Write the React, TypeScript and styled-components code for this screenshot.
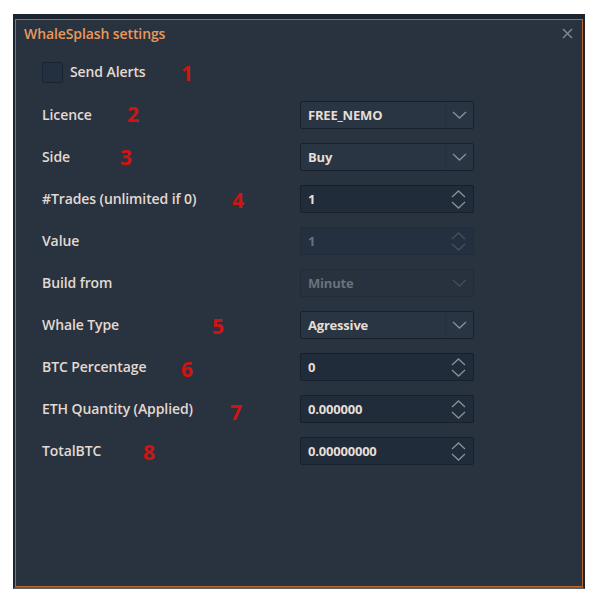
import React from "react";
import styled, { createGlobalStyle } from "styled-components";

const Global = createGlobalStyle`
  html, body { margin: 0; padding: 0; background: #ffffff; }
  body { font-family: "Open Sans", "Noto Sans", sans-serif; }
`;

const Page = styled.div`
  width: 598px;
  height: 608px;
  padding: 14px 0 0 13px;
  box-sizing: border-box;
  position: relative;
`;

const Window = styled.div`
  width: 572px;
  height: 575px;
  box-sizing: border-box;
  border-style: solid;
  border-color: #1c2430;
  border-width: 5px 2px 2px 2px;
  border-bottom-color: #59606a;
  background: #29333f;
`;

const Frame = styled.div`
  height: 100%;
  box-sizing: border-box;
  border: 1px solid #b9672b;
  display: flex;
  flex-direction: column;
`;

const TitleBar = styled.div`
  height: 27px;
  display: flex;
  align-items: center;
  justify-content: space-between;
  padding: 0 9px 0 8px;
`;

const Title = styled.span`
  color: #e8995c;
  font-size: 14px;
  font-weight: 600;
  letter-spacing: -0.1px;
`;

const Close = styled.span`
  width: 12px;
  height: 12px;
  display: flex;
  align-items: center;
  justify-content: center;
`;

const Body = styled.div`
  display: flex;
  flex-direction: column;
  padding: 15px 0 0 26px;
`;

const CheckRow = styled.label`
  position: relative;
  display: flex;
  align-items: center;
  gap: 7px;
  height: 21px;
  margin-bottom: 18px;
`;

const Box = styled.span`
  width: 19px;
  height: 19px;
  border: 1px solid #1b2330;
  border-radius: 2px;
  background: #223040;
`;

const Row = styled.div`
  position: relative;
  display: grid;
  grid-template-columns: 258px 174px;
  align-items: center;
  height: 28px;
  margin-bottom: 14px;
`;

const Label = styled.span`
  color: #e2dad2;
  font-size: 14px;
  font-weight: 600;
  letter-spacing: -0.1px;
  margin-top: -2px;
`;

const Marker = styled.span<{ $x: number; $dy?: number }>`
  position: absolute;
  left: ${(p) => p.$x}px;
  top: 50%;
  transform: translateY(calc(-50% + ${(p) => p.$dy ?? 0}px));
  color: #d01414;
  font-family: "Open Sans", sans-serif;
  font-size: 21px;
  font-weight: 700;
  line-height: 1;
`;

const Field = styled.div<{ $kind: "select" | "spin"; $disabled?: boolean }>`
  height: 28px;
  box-sizing: border-box;
  border: 1px solid ${(p) => (p.$disabled ? "#222c38" : "#18202b")};
  border-radius: 2px;
  background: ${(p) =>
    p.$kind === "spin" ? (p.$disabled ? "#243040" : "#212c3a") : p.$disabled ? "#27323e" : "#2a3543"};
  display: flex;
  align-items: center;
  color: ${(p) => (p.$disabled ? "#69717c" : "#e6ded6")};
  font-size: 13px;
  font-weight: 700;
  letter-spacing: -0.2px;
`;

const Value = styled.span`
  flex: 1;
  padding-left: 7px;
`;

const DropBtn = styled.span<{ $disabled?: boolean }>`
  width: 27px;
  height: 100%;
  border-left: 1px solid ${(p) => (p.$disabled ? "#29333f" : "#253040")};
  display: flex;
  align-items: center;
  justify-content: center;
`;

const SpinBtn = styled.span`
  width: 30px;
  height: 100%;
  display: flex;
  flex-direction: column;
  align-items: center;
  justify-content: center;
  gap: 3px;
`;

const Chevron = ({ up, color }: { up?: boolean; color: string }) => (
  <svg width="15" height="8" viewBox="0 0 15 8">
    <path
      d={up ? "M1 7 L7.5 1 L14 7" : "M1 1 L7.5 7 L14 1"}
      fill="none"
      stroke={color}
      strokeWidth="1.3"
    />
  </svg>
);

type Item = {
  label: string;
  kind: "select" | "spin";
  value: string;
  disabled?: boolean;
  mark?: { n: string; x: number; dy?: number };
};

const items: Item[] = [
  { label: "Licence", kind: "select", value: "FREE_NEMO", mark: { n: "2", x: 85, dy: -1 } },
  { label: "Side", kind: "select", value: "Buy", mark: { n: "3", x: 78, dy: 0 } },
  { label: "#Trades (unlimited if 0)", kind: "spin", value: "1", mark: { n: "4", x: 190, dy: 1 } },
  { label: "Value", kind: "spin", value: "1", disabled: true },
  { label: "Build from", kind: "select", value: "Minute", disabled: true },
  { label: "Whale Type", kind: "select", value: "Agressive", mark: { n: "5", x: 170, dy: 1 } },
  { label: "BTC Percentage", kind: "spin", value: "0", mark: { n: "6", x: 139, dy: 2 } },
  { label: "ETH Quantity (Applied)", kind: "spin", value: "0.000000", mark: { n: "7", x: 188, dy: 3 } },
  { label: "TotalBTC", kind: "spin", value: "0.00000000", mark: { n: "8", x: 101, dy: 1 } },
];

export default function App() {
  return (
    <Page>
      <Global />
      <Window>
        <Frame>
          <TitleBar>
            <Title>WhaleSplash settings</Title>
            <Close>
              <svg width="11" height="11" viewBox="0 0 11 11">
                <path d="M1 1 L10 10 M10 1 L1 10" stroke="#7f858c" strokeWidth="1.5" />
              </svg>
            </Close>
          </TitleBar>
          <Body>
            <CheckRow>
              <Box />
              <Label>Send Alerts</Label>
              <Marker $x={139}>1</Marker>
            </CheckRow>
            {items.map((it) => (
              <Row key={it.label}>
                <Label>{it.label}</Label>
                {it.mark && (
                  <Marker $x={it.mark.x} $dy={it.mark.dy}>
                    {it.mark.n}
                  </Marker>
                )}
                <Field $kind={it.kind} $disabled={it.disabled}>
                  <Value>{it.value}</Value>
                  {it.kind === "select" ? (
                    <DropBtn $disabled={it.disabled}>
                      <Chevron color={it.disabled ? "#444d59" : "#8b9097"} />
                    </DropBtn>
                  ) : (
                    <SpinBtn>
                      <Chevron up color={it.disabled ? "#46505c" : "#8b9097"} />
                      <Chevron color={it.disabled ? "#46505c" : "#8b9097"} />
                    </SpinBtn>
                  )}
                </Field>
              </Row>
            ))}
          </Body>
        </Frame>
      </Window>
    </Page>
  );
}
